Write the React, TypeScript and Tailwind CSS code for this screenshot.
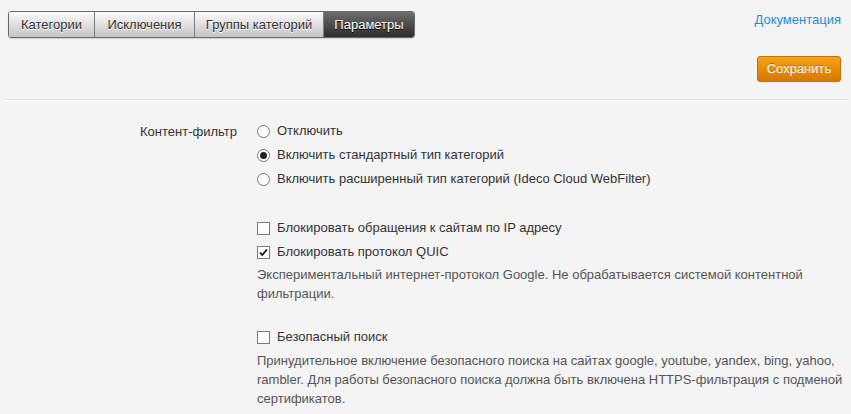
import React from "react";

const tabs = ["Категории", "Исключения", "Группы категорий", "Параметры"];

function Radio({ checked }: { checked?: boolean }) {
  return (
    <span className="w-[13px] h-[13px] rounded-full border border-[#7a7a7a] bg-white flex items-center justify-center shrink-0">
      {checked && <span className="w-[7px] h-[7px] rounded-full bg-[#222]" />}
    </span>
  );
}

function Check({ checked }: { checked?: boolean }) {
  return (
    <span className="w-[13px] h-[13px] border border-[#7a7a7a] bg-white flex items-center justify-center shrink-0">
      {checked && (
        <svg width="11" height="11" viewBox="0 0 11 11">
          <path d="M2 5.5 L4.3 8 L9 2.5" stroke="#111" strokeWidth="1.8" fill="none" />
        </svg>
      )}
    </span>
  );
}

export default function App() {
  return (
    <div
      className="w-[851px] h-[414px] bg-[#f4f4f4] text-[13px] text-[#333] overflow-hidden"
      style={{ fontFamily: '"Liberation Sans", Arial, sans-serif' }}
    >
      <div className="flex justify-between pl-[8px] pr-[10px] pt-[11px]">
        <div className="flex h-[27px] rounded-[3px] border border-[#6a6a6a] overflow-hidden shadow-[0_1px_1px_rgba(0,0,0,0.15)]">
          {tabs.map((t, i) => {
            const active = i === 3;
            const w = ["w-[85px]", "w-[100px]", "w-[129px]", "w-[91px]"][i];
            return (
              <div
                key={t}
                className={
                  w +
                  " flex items-center justify-center " +
                  (i > 0 ? "border-l border-[#7c7c7c] " : "") +
                  (active
                    ? "bg-[linear-gradient(#6e6e6e,#2c2c2c)] text-white [text-shadow:0_1px_0_#000]"
                    : "bg-[linear-gradient(#fbfbfb,#c4c4c4)] text-[#333] [text-shadow:0_1px_0_#fff]")
                }
              >
                {t}
              </div>
            );
          })}
        </div>
        <div className="flex flex-col items-end">
          <a className="text-[#1f8dd6] text-[13px] leading-[16px] mt-[1px]">Документация</a>
          <button className="mt-[28px] w-[84px] h-[26px] rounded-[3px] border border-[#c46f00] bg-[linear-gradient(#f8a116,#d57900)] text-white text-[13px] [text-shadow:0_-1px_0_rgba(0,0,0,0.25)]">
            Сохранить
          </button>
        </div>
      </div>

      <div className="mx-[4px] mt-[17px] border-t border-[#e2e2e2] border-b border-b-white" />

      <div className="flex pt-[18px]">
        <div className="w-[237px] text-right leading-[24px] pt-[1px]">Контент-фильтр</div>
        <div className="ml-[20px] w-[590px]">
          <div className="flex flex-col">
            <label className="flex items-center h-[24px] gap-[7px]">
              <Radio />
              <span>Отключить</span>
            </label>
            <label className="flex items-center h-[24px] gap-[7px]">
              <Radio checked />
              <span>Включить стандартный тип категорий</span>
            </label>
            <label className="flex items-center h-[24px] gap-[7px]">
              <Radio />
              <span>Включить расширенный тип категорий (Ideco Cloud WebFilter)</span>
            </label>
          </div>

          <div className="mt-[25px] flex flex-col">
            <label className="flex items-center h-[24px] gap-[7px]">
              <Check />
              <span>Блокировать обращения к сайтам по IP адресу</span>
            </label>
            <label className="flex items-center h-[24px] gap-[7px]">
              <Check checked />
              <span>Блокировать протокол QUIC</span>
            </label>
            <p className="text-[#555] leading-[19px] mt-[1px]">
              Экспериментальный интернет-протокол Google. Не обрабатывается системой контентной фильтрации.
            </p>
          </div>

          <div className="mt-[22px] flex flex-col">
            <label className="flex items-center h-[24px] gap-[7px]">
              <Check />
              <span>Безопасный поиск</span>
            </label>
            <p className="text-[#555] leading-[19px] mt-[2px]">
              Принудительное включение безопасного поиска на сайтах google, youtube, yandex, bing, yahoo,
              rambler. Для работы безопасного поиска должна быть включена HTTPS-фильтрация с подменой
              сертификатов.
            </p>
          </div>
        </div>
      </div>
    </div>
  );
}
